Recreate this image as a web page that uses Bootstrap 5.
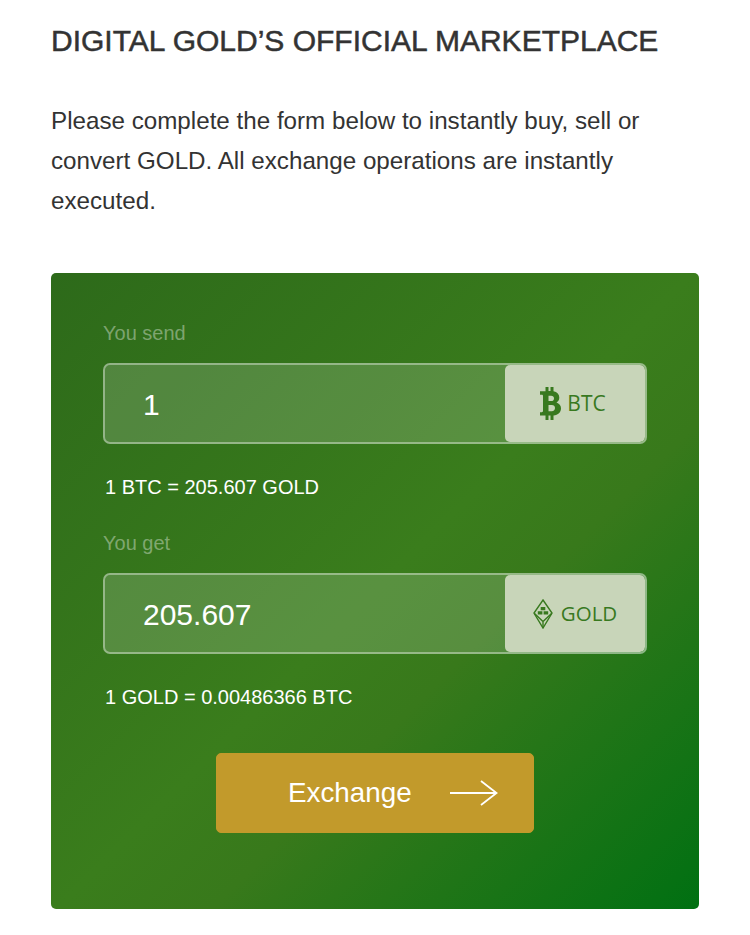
<!DOCTYPE html>
<html lang="en">
<head>
<meta charset="utf-8">
<title>Marketplace</title>
<link href="https://cdn.jsdelivr.net/npm/bootstrap@5.3.0/dist/css/bootstrap.min.css" rel="stylesheet">
<style>
html,body{background:#fff;}
body{font-family:"Liberation Sans",Arial,sans-serif;color:#333;padding:23px 51px 0;overflow:hidden;height:935px;}
.mp-title{font-family:"Liberation Sans",Arial,sans-serif;font-size:30px;line-height:36px;font-weight:400;color:#333;margin:0 0 42px;-webkit-text-stroke:.5px #333;}
.mp-intro{font-size:24.2px;line-height:40px;color:#333;margin:0 0 52px;}
.mp-panel{height:636px;border-radius:5px;padding:48px 52px 0;background:linear-gradient(135deg,#2d6a1a 0%,#3a7d1c 50%,#38791b 62%,#007012 100%);}
.mp-label{display:block;font-size:20px;line-height:24px;color:rgba(255,255,255,.38);margin:0 0 18px;}
.mp-field{height:81px;border:2px solid rgba(255,255,255,.38);border-radius:7px;background:rgba(255,255,255,.16);overflow:hidden;}
.mp-value{font-size:30px;line-height:1;color:#fff;padding:3px 0 0 38px;}
.mp-addon{width:140px;background:#c8d5b9;border-radius:5px;color:#38791f;font-family:"Open Sans",sans-serif;}
.mp-addon-btc{font-size:21px;gap:6px;padding-right:4px;}
.mp-addon-gold{font-size:20.5px;gap:8px;}
.mp-rate{font-size:20px;line-height:24px;color:#fff;margin:31px 0 32px 2px;}
.mp-rate-last{margin-bottom:44px;}
.mp-submit{width:318px;height:80px;background:#c29a2b;border-color:#c29a2b;border-radius:5px;color:#fff;font-size:27.8px;gap:38px;padding:0 0 0 71px;}
</style>
</head>
<body>
<h1 class="mp-title">DIGITAL GOLD’S OFFICIAL MARKETPLACE</h1>
<p class="mp-intro">Please complete the form below to instantly buy, sell or convert GOLD. All exchange operations are instantly executed.</p>
<form class="mp-panel">
  <label class="mp-label">You send</label>
  <div class="mp-field d-flex align-items-stretch">
    <div class="mp-value flex-grow-1 d-flex align-items-center">1</div>
    <div class="mp-addon mp-addon-btc d-flex align-items-center justify-content-center">
      <svg width="21" height="33" viewBox="0 0 21 33" fill="#38791f" aria-hidden="true"><path fill-rule="evenodd" d="M5.500 0h3v4h2V0h3v4.300c3.700.7 5.800 3 5.800 6.200 0 2.400-1 3.900-2.800 4.900 2.700.9 4.500 3 4.500 5.800 0 4-2.800 6.800-7.500 7.300V33h-3v-4.400h-2V33h-3v-4.400H0v-3.400h1.800c.8 0 1.200-.4 1.200-1.200V9c0-.8-.4-1.200-1.200-1.200H0V4.200h5.500zM8.500 8.800v5.200h2.700c1.700 0 2.800-1 2.800-2.600s-1.100-2.600-2.800-2.600zm0 9.200v6.200h3.300c2 0 3.200-1.200 3.200-3.100S13.800 18 11.800 18z"/></svg>
      <span>BTC</span>
    </div>
  </div>
  <div class="mp-rate">1 BTC = 205.607 GOLD</div>
  <label class="mp-label">You get</label>
  <div class="mp-field d-flex align-items-stretch">
    <div class="mp-value flex-grow-1 d-flex align-items-center">205.607</div>
    <div class="mp-addon mp-addon-gold d-flex align-items-center justify-content-center">
      <svg width="20" height="30" viewBox="0 0 20 30" fill="none" stroke="#38791f" stroke-width="1.400" aria-hidden="true"><path d="M10 1 19 14 10 29 1 14z"/><path d="M1.500 14.500 10 22.500l8.500-8M10 22.500V29"/><path fill="#38791f" stroke="none" d="M7.700 8h4.600v3.200H7.700zM4.800 12.300h4.600v3.200H4.800zM10.600 12.300h4.600v3.200h-4.600z"/></svg>
      <span>GOLD</span>
    </div>
  </div>
  <div class="mp-rate mp-rate-last">1 GOLD = 0.00486366 BTC</div>
  <div class="d-flex justify-content-center">
    <button type="button" class="btn mp-submit d-flex align-items-center">
      <span>Exchange</span>
      <svg class="flex-shrink-0" width="48" height="26" viewBox="0 0 48 26" fill="none" stroke="#fff" stroke-width="1.800" aria-hidden="true"><path d="M0 13h46.500M31 1l15.500 12L31 25"/></svg>
    </button>
  </div>
</form>
<script src="https://cdn.jsdelivr.net/npm/bootstrap@5.3.0/dist/js/bootstrap.bundle.min.js"></script>
</body>
</html>
